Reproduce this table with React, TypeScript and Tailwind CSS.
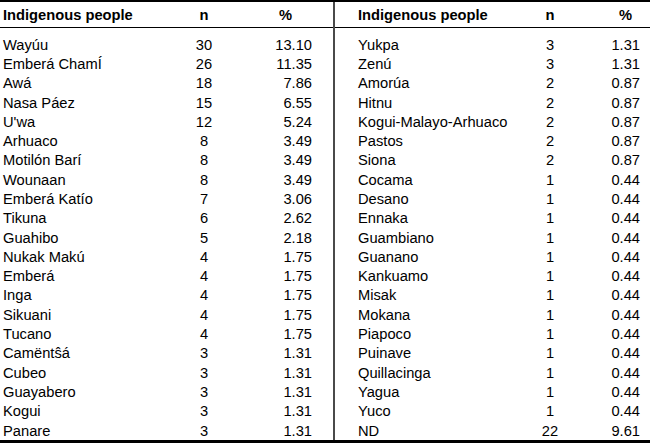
type Row = [string, string, string];

const LEFT: Row[] = [
  ["Wayúu", "30", "13.10"],
  ["Emberá ChamÍ", "26", "11.35"],
  ["Awá", "18", "7.86"],
  ["Nasa Páez", "15", "6.55"],
  ["U'wa", "12", "5.24"],
  ["Arhuaco", "8", "3.49"],
  ["Motilón Barí", "8", "3.49"],
  ["Wounaan", "8", "3.49"],
  ["Emberá Katío", "7", "3.06"],
  ["Tikuna", "6", "2.62"],
  ["Guahibo", "5", "2.18"],
  ["Nukak Makú", "4", "1.75"],
  ["Emberá", "4", "1.75"],
  ["Inga", "4", "1.75"],
  ["Sikuani", "4", "1.75"],
  ["Tucano", "4", "1.75"],
  ["Camëntŝá", "3", "1.31"],
  ["Cubeo", "3", "1.31"],
  ["Guayabero", "3", "1.31"],
  ["Kogui", "3", "1.31"],
  ["Panare", "3", "1.31"],
];

const RIGHT: Row[] = [
  ["Yukpa", "3", "1.31"],
  ["Zenú", "3", "1.31"],
  ["Amorúa", "2", "0.87"],
  ["Hitnu", "2", "0.87"],
  ["Kogui-Malayo-Arhuaco", "2", "0.87"],
  ["Pastos", "2", "0.87"],
  ["Siona", "2", "0.87"],
  ["Cocama", "1", "0.44"],
  ["Desano", "1", "0.44"],
  ["Ennaka", "1", "0.44"],
  ["Guambiano", "1", "0.44"],
  ["Guanano", "1", "0.44"],
  ["Kankuamo", "1", "0.44"],
  ["Misak", "1", "0.44"],
  ["Mokana", "1", "0.44"],
  ["Piapoco", "1", "0.44"],
  ["Puinave", "1", "0.44"],
  ["Quillacinga", "1", "0.44"],
  ["Yagua", "1", "0.44"],
  ["Yuco", "1", "0.44"],
  ["ND", "22", "9.61"],
];

export default function App() {
  return (
    <div className="w-[650px] h-[445px] bg-white text-black text-[14.7px] font-['Liberation_Sans',Arial,sans-serif] overflow-hidden">
      <div className="border-t-2 border-b-[3px] border-black flex">
        {/* left half */}
        <div className="w-[333px]">
          <div className="h-[26px] pt-[2px] border-b border-black flex items-center pl-[3px] font-bold">
            <span className="w-[179px]">Indigenous people</span>
            <span className="w-[44px] text-center">n</span>
            <span className="w-[86px] text-right pr-[20px]">%</span>
          </div>
          <div className="pt-[7px]">
            {LEFT.map(([name, n, pct]) => (
              <div key={name} className="h-[19.3px] flex items-center pl-[3px]">
                <span className="w-[179px] whitespace-nowrap">{name}</span>
                <span className="w-[44px] text-center">{n}</span>
                <span className="w-[86px] text-right">{pct}</span>
              </div>
            ))}
          </div>
        </div>

        <div className="w-[2px] bg-[#4a4a4a]" />

        {/* right half */}
        <div className="flex-1">
          <div className="h-[26px] pt-[2px] border-b border-black flex items-center pl-[23px] font-bold">
            <span className="w-[170px]">Indigenous people</span>
            <span className="w-[44px] text-center">n</span>
            <span className="w-[68px] text-right pr-[8px]">%</span>
          </div>
          <div className="pt-[7px]">
            {RIGHT.map(([name, n, pct]) => (
              <div key={name} className="h-[19.3px] flex items-center pl-[23px]">
                <span className="w-[170px] whitespace-nowrap">{name}</span>
                <span className="w-[44px] text-center">{n}</span>
                <span className="w-[68px] text-right">{pct}</span>
              </div>
            ))}
          </div>
        </div>
      </div>
    </div>
  );
}
